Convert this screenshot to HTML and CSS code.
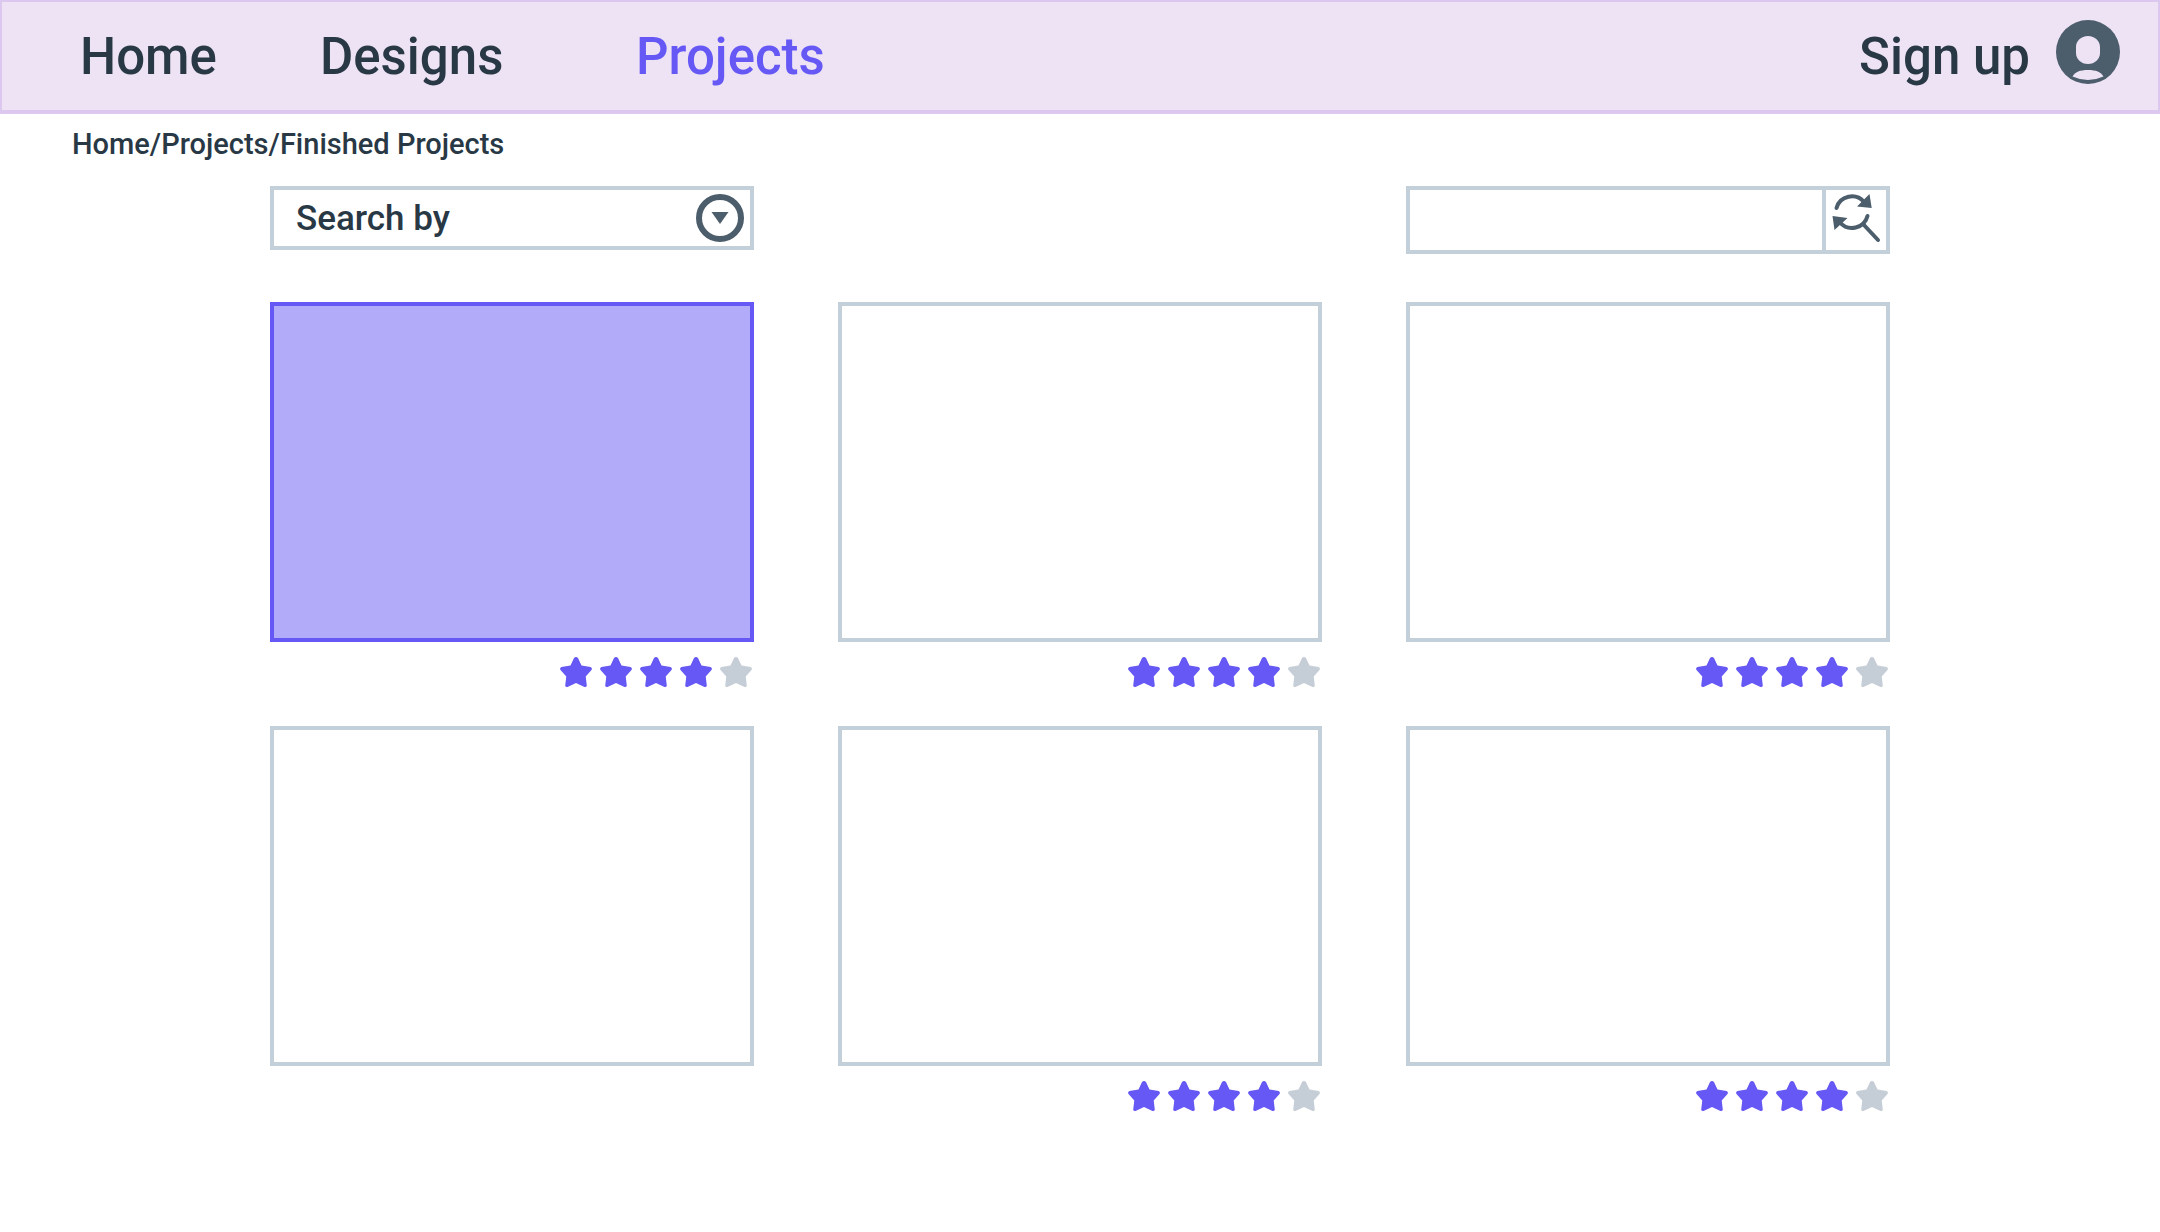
FILE: index.html
```html
<!DOCTYPE html>
<html lang="en">
<head>
<meta charset="utf-8">
<meta name="viewport" content="width=device-width, initial-scale=1">
<title>Finished Projects</title>
<link rel="stylesheet" href="styles.css">
</head>
<body>
<svg class="sprite" aria-hidden="true">
  <symbol id="star" viewBox="0 0 32 32"><path d="M14 2Q16 0 18 2L21.5 9.5L30.5 11Q32.7 12 31.5 14L25.7 20.5L26.8 29.5Q26.5 31.5 24.5 31L16 27L7.5 31Q5.500 31.5 5.200 29.5L6.300 20.5L.5 14Q-.7 12 1.500 11L10.500 9.500Z"/></symbol>
  <symbol id="rating" viewBox="0 0 192 32">
    <g class="star-on"><use href="#star" width="32" height="32"/><use href="#star" x="40" width="32" height="32"/><use href="#star" x="80" width="32" height="32"/><use href="#star" x="120" width="32" height="32"/></g>
    <use class="star-off" href="#star" x="160" width="32" height="32"/>
  </symbol>
</svg>
<header class="topbar">
  <nav class="nav" aria-label="Main">
    <a href="#home">Home</a>
    <a href="#designs">Designs</a>
    <a class="current" href="#projects" aria-current="page">Projects</a>
  </nav>
  <a class="account" href="#signup">Sign up
    <svg class="avatar" viewBox="0 0 64 64" aria-hidden="true"><path fill="currentColor" fill-rule="evenodd" d="M32 0A32 32 0 1 1 32 64A32 32 0 1 1 32 0ZM32 16C25 16 20 21 20 27V33C20 39 25 44 32 44S44 39 44 33V27C44 21 39 16 32 16ZM16.500 56.500Q32 63.500 47.500 56.500C45 52 40 50 32 50S19 52 16.500 56.500Z"/></svg>
  </a>
</header>
<nav class="breadcrumb" aria-label="Breadcrumb"><a href="#home">Home</a>/<a href="#projects">Projects</a>/<a href="#finished">Finished Projects</a></nav>
<main class="content">
  <form class="filters">
    <div class="select">
      <select aria-label="Search by"><option>Search by</option></select>
      <svg class="select-icon" viewBox="0 0 48 48" aria-hidden="true"><circle cx="24" cy="24" r="21" fill="none" stroke="currentColor" stroke-width="6"/><path fill="currentColor" d="M15.500 18H32.500L24 30Z"/></svg>
    </div>
    <div class="search">
      <input type="search" aria-label="Search projects">
      <button type="submit" aria-label="Search">
        <svg viewBox="0 0 60 60" aria-hidden="true"><g fill="none" stroke="currentColor" stroke-width="4" stroke-linecap="round"><path d="M10.500 18A16 16 0 0 1 38 12"/><path d="M41.500 26A16 16 0 0 1 14 32.500"/><path d="M37.500 34.500L52 50"/></g><path fill="currentColor" d="M43.500 4L45.700 18L31 16.500ZM6.500 26L21.500 28L8.500 40Z"/></svg>
      </button>
    </div>
  </form>
  <section class="projects" aria-label="Projects">
    <article><a class="thumb selected" href="#project-1" aria-label="Project 1"></a><svg class="rating" role="img" aria-label="4 out of 5"><use href="#rating"/></svg></article>
    <article><a class="thumb" href="#project-2" aria-label="Project 2"></a><svg class="rating" role="img" aria-label="4 out of 5"><use href="#rating"/></svg></article>
    <article><a class="thumb" href="#project-3" aria-label="Project 3"></a><svg class="rating" role="img" aria-label="4 out of 5"><use href="#rating"/></svg></article>
    <article><a class="thumb" href="#project-4" aria-label="Project 4"></a></article>
    <article><a class="thumb" href="#project-5" aria-label="Project 5"></a><svg class="rating" role="img" aria-label="4 out of 5"><use href="#rating"/></svg></article>
    <article><a class="thumb" href="#project-6" aria-label="Project 6"></a><svg class="rating" role="img" aria-label="4 out of 5"><use href="#rating"/></svg></article>
  </section>
</main>
</body>
</html>
```
FILE: styles.css
```css
:root {
  --ink: #293845;
  --icon: #4c5d6b;
  --line: #c3cfd9;
  --accent: #6558f5;
  --accent-soft: #b2abfa;
}
* { box-sizing: border-box; }
body {
  margin: 0;
  background: #fff;
  color: var(--ink);
  font-family: Roboto, "Liberation Sans", sans-serif;
  font-weight: 500;
}
a { color: inherit; text-decoration: none; }
.sprite { display: none; }

.topbar {
  display: flex;
  justify-content: space-between;
  align-items: center;
  height: 114px;
  padding: 2px 38px 0 78px;
  background: #eee3f5;
  border: 2px solid #dcc8ef;
  border-bottom-width: 4px;
  font-size: 51px;
  line-height: 60px;
}
.nav { display: grid; grid-template-columns: 240px 316px auto; }
.nav .current { color: var(--accent); }
.account { display: flex; align-items: center; gap: 26px; }
.avatar { width: 64px; height: 64px; margin-bottom: 10px; color: var(--icon); }

.breadcrumb {
  padding: 12px 72px;
  font-size: 29px;
  line-height: 36px;
}

.content { padding: 12px 12.5% 0; }
.filters, .projects {
  display: grid;
  grid-template-columns: repeat(3, minmax(0, 1fr));
  column-gap: 84px;
}
.filters { align-items: start; }
.select { display: grid; align-items: center; }
.select select, .select-icon { grid-area: 1 / 1; }
.select select {
  appearance: none;
  width: 100%;
  height: 64px;
  padding: 0 64px 0 22px;
  background: none;
  border: 4px solid var(--line);
  border-radius: 0;
  color: inherit;
  font: inherit;
  font-size: 35px;
}
.select-icon {
  justify-self: end;
  width: 48px;
  height: 48px;
  margin-right: 10px;
  color: var(--icon);
  pointer-events: none;
}
.search {
  display: flex;
  grid-column: 3;
  height: 68px;
  border: 4px solid var(--line);
}
.search input {
  flex: 1;
  min-width: 0;
  padding: 0 20px;
  appearance: none;
  background: none;
  border: 0;
  color: inherit;
  font: inherit;
  font-size: 35px;
}
.search button {
  width: 64px;
  padding: 0;
  background: none;
  border: 0;
  border-left: 4px solid var(--line);
  color: var(--icon);
}
.search svg { display: block; width: 60px; height: 60px; }

.projects { row-gap: 38px; padding: 48px 0; }
.thumb {
  display: block;
  aspect-ratio: 484 / 340;
  border: 4px solid var(--line);
}
.thumb.selected { background: var(--accent-soft); border-color: var(--accent); }
.rating {
  display: block;
  width: 192px;
  height: 32px;
  margin: 14px 2px 0 auto;
}
.star-on { fill: var(--accent); }
.star-off { fill: #c5cdd7; }
```
